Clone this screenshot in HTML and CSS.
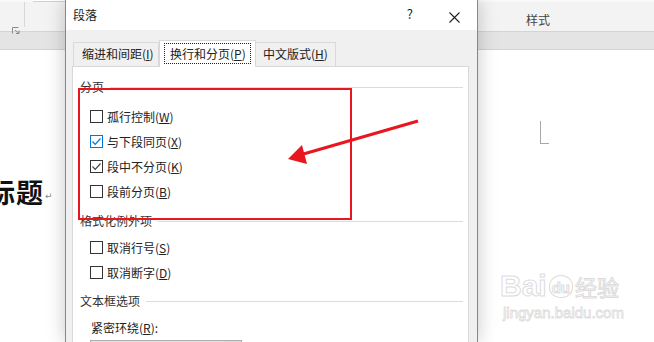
FILE: index.html
```html
<!DOCTYPE html>
<html lang="zh-CN">
<head>
  <meta charset="UTF-8" />
  <title>段落</title>
  <link rel="stylesheet" href="styles.css">
</head>
<body>
  <div class="word">
    <div class="ribbon">
      <div class="rb-launch">
        <svg width="8" height="7" viewBox="0 0 8 7"><path d="M0.5 6.5V0.5H6.5" fill="none" stroke="#8a8a8a"/><path d="M3 3L7 6.5M7 3.5V6.5H4" fill="none" stroke="#8a8a8a"/></svg>
      </div>
      <div class="rb-sep"></div>
      <div class="rb-box"></div>
      <div class="rb-styles">样式</div>
    </div>
    <div class="band"></div>
    <div class="doc">
      <div class="doc-title"><span class="title-text">标题</span><span class="return">↵</span></div>
    </div>
  </div>

  <div class="corner-mark"></div>
  <div class="watermark">
    <div class="wm-logo">Bai<span class="wm-paw">du</span><span class="wm-cn">经验</span></div>
    <div class="wm-url">jingyan.baidu.com</div>
  </div>

  <div class="dialog">
    <div class="titlebar">
      <span class="dlg-title">段落</span>
      <span class="help">?</span>
      <span class="close">
        <svg width="11" height="11" viewBox="0 0 11 11"><path d="M0.5 0.5L10.5 10.5M10.5 0.5L0.5 10.5" stroke="#222" stroke-width="1.1"/></svg>
      </span>
    </div>
    <div class="dlg-body">
      <div class="tabs">
        <div class="tab tab-indent">缩进和间距(<u>I</u>)</div>
        <div class="tab active"><span class="focus">换行和分页(<u>P</u>)</span></div>
        <div class="tab tab-cn">中文版式(<u>H</u>)</div>
      </div>
      <div class="panel">
        <div class="group-title first"><span>分页</span></div>
        <ul class="opts">
          <li><span class="cb"></span>孤行控制(<u>W</u>)</li>
          <li><span class="cb checked focus-cb"><svg width="11" height="11" viewBox="0 0 11 11"><path d="M1.5 5.5L4.2 8.3L9.5 2.5" fill="none" stroke="#0078d7" stroke-width="1.2"/></svg></span>与下段同页(<u>X</u>)</li>
          <li><span class="cb checked"><svg width="11" height="11" viewBox="0 0 11 11"><path d="M1.5 5.5L4.2 8.3L9.5 2.5" fill="none" stroke="#444" stroke-width="1.2"/></svg></span>段中不分页(<u>K</u>)</li>
          <li><span class="cb"></span>段前分页(<u>B</u>)</li>
        </ul>
        <div class="group-title second"><span>格式化例外项</span></div>
        <ul class="opts opts-second">
          <li><span class="cb"></span>取消行号(<u>S</u>)</li>
          <li><span class="cb"></span>取消断字(<u>D</u>)</li>
        </ul>
        <div class="group-title third"><span>文本框选项</span></div>
        <div class="field-label">紧密环绕(<u>R</u>):</div>
        <div class="combo"><span class="combo-btn"></span></div>
      </div>
    </div>
  </div>

  <div class="callout"></div>
  <svg class="arrow" width="654" height="342" viewBox="0 0 654 342">
    <line x1="418" y1="121" x2="300" y2="155" stroke="#e8161e" stroke-width="3"/>
    <polygon points="288,159 302,145 307,164" fill="#e8161e"/>
  </svg>
</body>
</html>
```

FILE: styles.css
```css
body {
  margin: 0;
  width: 654px;
  height: 342px;
  overflow: hidden;
  position: relative;
  font-family: "Noto Sans CJK SC", "Microsoft YaHei", sans-serif;
  font-size: 12px;
  color: #222;
  background: #fff;
}
u {
  text-decoration: underline;
  text-underline-offset: 1px;
}

/* word window behind */
.ribbon {
  height: 29px;
  background: #f3f3f3;
  border-top: 2px solid #f8f8f8;
  border-bottom: 1px solid #d4d4d4;
  display: flex;
}
.rb-launch {
  width: 12px;
  padding: 18px 0 0 12px;
}
.rb-sep {
  width: 1px;
  height: 25px;
  background: #d8d8d8;
}
.rb-box {
  margin-left: 8px;
  width: 40px;
  height: 1px;
  margin-top: -2px;
  background: #fff;
  border-bottom: 1px solid #cfcfcf;
}
.rb-styles {
  margin-left: auto;
  margin-right: 104px;
  padding-top: 10px;
  line-height: 16px;
  color: #444;
}
.band {
  height: 17px;
  background: #e4e4e4;
  border-bottom: 1px solid #d2d2d2;
}
.doc {
  display: flex;
  padding-top: 125px;
}
.doc-title {
  margin-left: -12px;
  display: flex;
  align-items: center;
}
.title-text {
  font-size: 27px;
  font-weight: bold;
  line-height: 34px;
  letter-spacing: 1px;
  color: #111;
}
.return {
  font-family: "DejaVu Sans", sans-serif;
  font-size: 9px;
  color: #888;
  margin: 8px 0 0 1px;
}
.corner-mark {
  position: absolute;
  left: 540px;
  top: 121px;
  width: 8px;
  height: 22px;
  border-left: 1px solid #a8a8a8;
  border-bottom: 1px solid #a8a8a8;
}
.watermark {
  position: absolute;
  left: 500px;
  top: 268px;
  color: #fff;
  -webkit-text-stroke: 1px #dcdcdc;
  font-family: "Liberation Sans", Arial, sans-serif;
}
.wm-logo {
  font-size: 30px;
  font-weight: bold;
  line-height: 36px;
  display: flex;
  align-items: center;
}
.wm-paw {
  font-size: 15px;
  border: 1px solid #dcdcdc;
  border-radius: 50% 50% 45% 45%;
  padding: 4px 2px 1px;
  margin: 0 2px;
  line-height: 16px;
}
.wm-cn {
  font-family: "Noto Sans CJK SC", sans-serif;
  font-size: 22px;
  font-weight: normal;
}
.wm-url {
  font-size: 15px;
  line-height: 18px;
  margin-left: 3px;
  -webkit-text-stroke: 0.8px #dcdcdc;
}

/* dialog */
.dialog {
  position: absolute;
  left: 65px;
  top: 0;
  width: 411px;
  height: 342px;
  overflow: hidden;
  background: #f0f0f0;
  border-left: 1px solid #c8678a;
  border-right: 1px solid #c8678a;
  box-shadow: 0 0 18px rgba(0, 0, 0, 0.22);
}
.titlebar {
  height: 30px;
  background: #fff;
  display: flex;
  align-items: center;
  padding-left: 7px;
}
.dlg-title {
  line-height: 16px;
}
.help {
  margin-left: auto;
  font-size: 13px;
  line-height: 16px;
  margin-top: -2px;
}
.close {
  margin-left: 36px;
  margin-right: 17px;
  height: 11px;
  margin-top: -2px;
}
.dlg-body {
  padding: 10px 8px 0 6px;
}
.tabs {
  display: flex;
  align-items: flex-end;
  height: 26px;
  padding-left: 1px;
  position: relative;
  z-index: 1;
}
.tab {
  box-sizing: border-box;
  height: 24px;
  line-height: 22px;
  border: 1px solid #d9d9d9;
  border-bottom: none;
  background: #f0f0f0;
  color: #222;
}
.tab-indent {
  width: 86px;
  padding-left: 8px;
}
.tab-cn {
  width: 80px;
  padding-left: 7px;
  border-left: none;
}
.tab.active {
  width: 97px;
  height: 27px;
  margin-bottom: -1px;
  background: #fff;
  padding: 2px 4px 0;
}
.focus {
  display: block;
  height: 21px;
  line-height: 20px;
  border: 1px dotted #222;
  box-sizing: border-box;
  padding-left: 5px;
}
.panel {
  background: #fff;
  border: 1px solid #d9d9d9;
  height: 300px;
  padding: 0 5px 0 7px;
}
.group-title {
  display: flex;
  align-items: center;
  height: 16px;
  line-height: 16px;
  color: #333;
}
.group-title::after {
  content: "";
  flex: 1;
  height: 1px;
  background: #dcdcdc;
  margin-left: 6px;
}
.group-title.first {
  margin-top: 12px;
}
.group-title.second {
  margin-top: 9px;
}
.group-title.third {
  margin-top: 8px;
}
.opts {
  list-style: none;
  margin: 9px 0 0;
  padding: 0 0 0 10px;
}
.opts-second {
  margin-top: 6px;
}
.opts li {
  height: 25px;
  display: flex;
  align-items: center;
  line-height: 16px;
}
.cb {
  box-sizing: border-box;
  width: 13px;
  height: 13px;
  border: 1px solid #333;
  background: #fff;
  margin-right: 4px;
  display: flex;
  align-items: center;
  justify-content: center;
}
.cb.focus-cb {
  border-color: #0078d7;
}
.field-label {
  margin: 11px 0 0 11px;
  line-height: 16px;
}
.combo {
  margin: 4px 0 0 10px;
  width: 152px;
  height: 22px;
  box-sizing: border-box;
  border: 1px solid #adadad;
  background: #e5e5e5;
  display: flex;
  justify-content: flex-end;
}
.combo-btn {
  width: 17px;
  background: #dadada;
}

/* annotation overlay */
.callout {
  position: absolute;
  left: 78px;
  top: 88px;
  width: 274px;
  height: 132px;
  box-sizing: border-box;
  border: 2px solid #e8161e;
}
.arrow {
  position: absolute;
  left: 0;
  top: 0;
}
```
